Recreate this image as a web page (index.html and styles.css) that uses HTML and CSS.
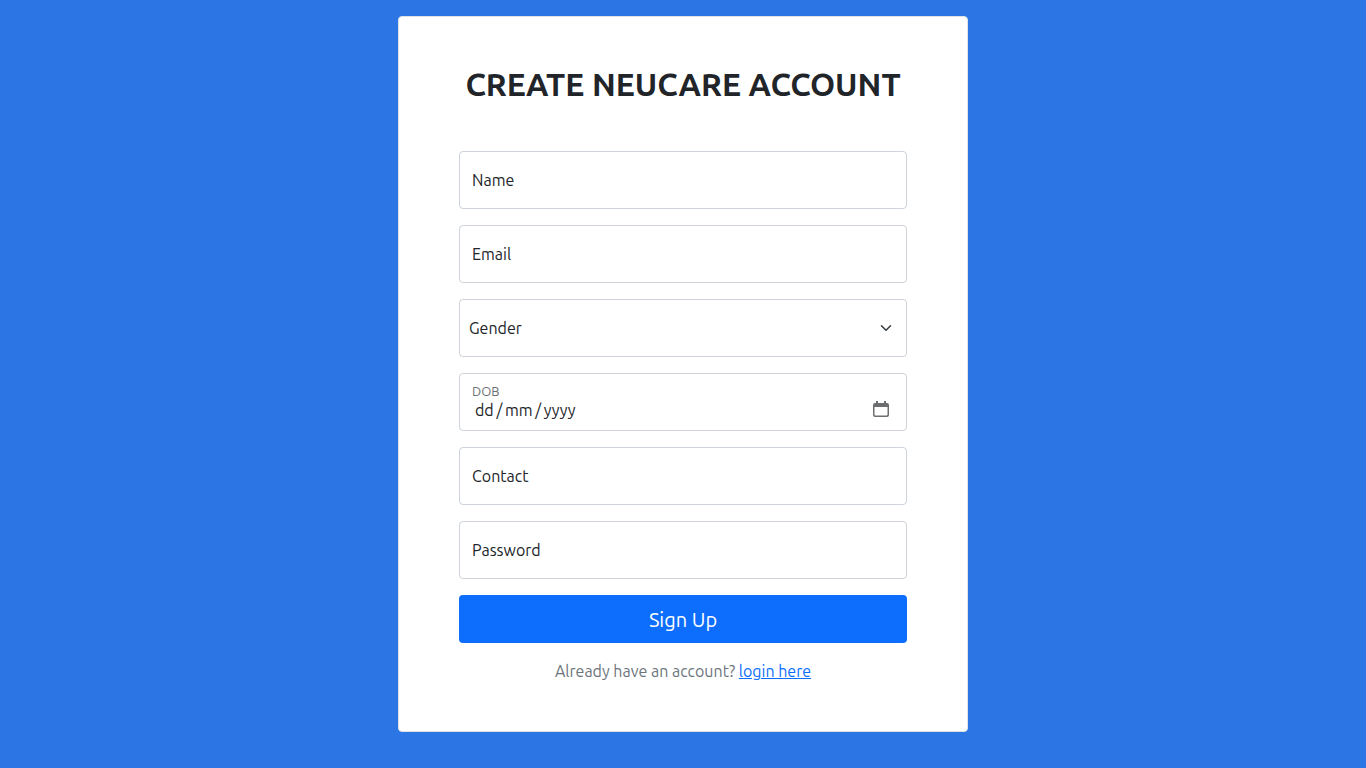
FILE: index.html
```html
<!DOCTYPE html>
<html lang="en-GB">
<head>
<meta charset="utf-8">
<meta name="viewport" content="width=device-width, initial-scale=1">
<title>Create Neucare Account</title>
<link rel="stylesheet" href="styles.css">
</head>
<body>
<main class="card">
  <h1 class="title">CREATE NEUCARE ACCOUNT</h1>
  <form class="form">
    <div class="field">
      <input class="control" type="text" id="name" name="name" placeholder=" ">
      <label class="label" for="name">Name</label>
    </div>
    <div class="field">
      <input class="control" type="email" id="email" name="email" placeholder=" ">
      <label class="label" for="email">Email</label>
    </div>
    <div class="field">
      <select class="control select" id="gender" name="gender" aria-label="Gender">
        <option selected>Gender</option>
        <option>Male</option>
        <option>Female</option>
        <option>Other</option>
      </select>
      <svg class="chevron" viewBox="0 0 16 16" aria-hidden="true"><path d="m2 5 6 6 6-6"/></svg>
    </div>
    <div class="field">
      <input class="control date" type="text" id="dob" name="dob" placeholder="dd&#8201;/&#8201;mm&#8201;/&#8201;yyyy">
      <label class="label label-raised" for="dob">DOB</label>
      <button class="calendar" type="button" aria-label="Choose date"><svg viewBox="0 0 16 16" aria-hidden="true"><path fill-rule="evenodd" d="M3 0h2v2h6V0h2v2h1a2 2 0 0 1 2 2v10a2 2 0 0 1-2 2H2a2 2 0 0 1-2-2V4a2 2 0 0 1 2-2h1zM1.500 6v7.500q0 1 1 1h11q1 0 1-1V6z"/></svg></button>
    </div>
    <div class="field">
      <input class="control" type="tel" id="contact" name="contact" placeholder=" ">
      <label class="label" for="contact">Contact</label>
    </div>
    <div class="field">
      <input class="control" type="password" id="password" name="password" placeholder=" ">
      <label class="label" for="password">Password</label>
    </div>
    <button class="submit" type="submit">Sign Up</button>
    <p class="note">Already have an account? <a class="link" href="#login">login here</a></p>
  </form>
</main>
</body>
</html>
```
FILE: styles.css
```css
* {
  box-sizing: border-box;
}

body {
  margin: 0;
  padding: 16px;
  background: #2c75e4;
  color: #212529;
  font-family: Ubuntu, "Noto Sans", sans-serif;
  font-size: 16px;
  line-height: 24px;
}

.card {
  max-width: 570px;
  margin: 0 auto;
  padding: 48px 60px;
  border: 1px solid #dee2e6;
  border-radius: 4px;
  background: #fff;
}

.title {
  margin: 0 0 48px;
  font-size: 32px;
  font-weight: 600;
  line-height: 38px;
  text-align: center;
}

.form {
  display: flex;
  flex-direction: column;
  gap: 16px;
}

.field {
  position: relative;
}

.control {
  display: block;
  width: 100%;
  height: 58px;
  padding: 16px 12px;
  border: 1px solid #ced4da;
  border-radius: 4px;
  background: #fff;
  color: inherit;
  font: inherit;
}

.control:focus {
  outline: 3px solid #b6d4fe;
}

.label {
  position: absolute;
  top: 17px;
  left: 13px;
  pointer-events: none;
}

.control:not(:placeholder-shown) + .label,
.label-raised {
  top: 6px;
  color: #6c6f72;
  font-size: 13px;
}

.select {
  padding: 0 36px 0 9px;
  appearance: none;
}

.chevron {
  position: absolute;
  top: 23px;
  right: 15px;
  width: 12px;
  height: 12px;
  fill: none;
  stroke: #343a40;
  stroke-width: 2;
  stroke-linecap: round;
  stroke-linejoin: round;
  pointer-events: none;
}

.date {
  padding: 24px 48px 8px 15px;
}

.date::placeholder {
  color: #212529;
  opacity: 1;
}

.calendar {
  position: absolute;
  top: 28px;
  right: 18px;
  width: 16px;
  height: 16px;
  padding: 0;
  border: 0;
  background: none;
}

.calendar svg {
  display: block;
  width: 16px;
  height: 16px;
  fill: #6c6e70;
}

.submit {
  padding: 10px 16px 8px;
  border: 0;
  border-radius: 4px;
  background: #0d6efd;
  color: #fff;
  font: inherit;
  font-size: 20px;
  line-height: 30px;
}

.note {
  margin: 0;
  color: #6c757d;
  text-align: center;
}

.link {
  color: #0d6efd;
}
```
